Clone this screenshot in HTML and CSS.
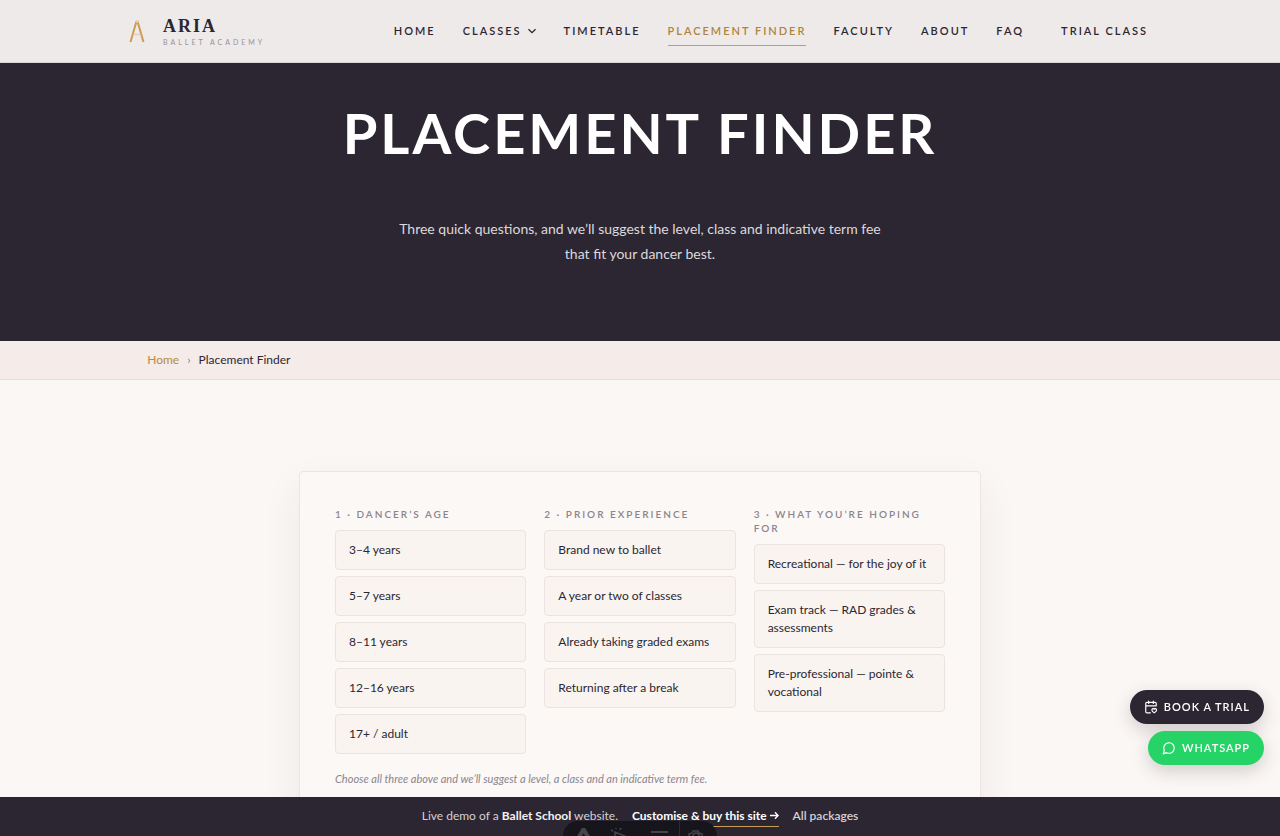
FILE: index.html
```html
<!DOCTYPE html>
<html lang="en">
<head>
<meta charset="utf-8">
<meta name="viewport" content="width=device-width, initial-scale=1">
<title>Placement Finder – Aria Ballet Academy</title>
<link rel="stylesheet" href="styles.css">
</head>
<body>
<header class="site-header">
  <div class="header-inner">
    <a class="brand" href="#">
      <svg class="brand-mark" viewBox="0 0 18 28" fill="none" aria-hidden="true">
        <path d="M2.500 25 8.300 5h1.400l5.800 20" stroke="#c99d52" stroke-width="2"/>
        <path d="M5.500 17.500h7" stroke="#e8c9c0" stroke-width="1.400"/>
        <circle cx="9" cy="4.500" r="1.500" fill="#e9c3b8"/>
      </svg>
      <span class="brand-text">
        <span class="brand-name">ARIA</span>
        <span class="brand-sub">BALLET ACADEMY</span>
      </span>
    </a>
    <nav class="nav" aria-label="Main">
      <a href="#">HOME</a>
      <a href="#">CLASSES
        <svg class="chevron" viewBox="0 0 10 10" fill="none" stroke="currentColor" stroke-width="1.300" aria-hidden="true"><path d="M1.500 3.200 5 6.700l3.500-3.500"/></svg>
      </a>
      <a href="#">TIMETABLE</a>
      <a href="#" class="active" aria-current="page">PLACEMENT FINDER</a>
      <a href="#">FACULTY</a>
      <a href="#">ABOUT</a>
      <a href="#">FAQ</a>
      <a href="#" class="trial">TRIAL CLASS</a>
    </nav>
  </div>
</header>
<main>
  <section class="hero">
    <h1>PLACEMENT FINDER</h1>
    <p>Three quick questions, and we’ll suggest the level, class and indicative term fee that fit your dancer best.</p>
  </section>
  <nav class="crumbs" aria-label="Breadcrumb">
    <div class="crumbs-inner"><a href="#">Home</a><span class="sep">›</span><span>Placement Finder</span></div>
  </nav>
  <section class="finder">
    <div class="card">
      <div class="questions">
        <div class="question" role="group" aria-labelledby="q-age">
          <h2 id="q-age">1 · DANCER’S AGE</h2>
          <button type="button">3–4 years</button>
          <button type="button">5–7 years</button>
          <button type="button">8–11 years</button>
          <button type="button">12–16 years</button>
          <button type="button">17+ / adult</button>
        </div>
        <div class="question" role="group" aria-labelledby="q-exp">
          <h2 id="q-exp">2 · PRIOR EXPERIENCE</h2>
          <button type="button">Brand new to ballet</button>
          <button type="button">A year or two of classes</button>
          <button type="button">Already taking graded exams</button>
          <button type="button">Returning after a break</button>
        </div>
        <div class="question" role="group" aria-labelledby="q-goal">
          <h2 id="q-goal">3 · WHAT YOU’RE HOPING FOR</h2>
          <button type="button">Recreational — for the joy of it</button>
          <button type="button">Exam track — RAD grades &amp; assessments</button>
          <button type="button">Pre-professional — pointe &amp; vocational</button>
        </div>
      </div>
      <p class="hint">Choose all three above and we’ll suggest a level, a class and an indicative term fee.</p>
    </div>
  </section>
</main>
<div class="floating">
  <a class="pill pill-dark" href="#">
    <svg viewBox="0 0 24 24" fill="none" stroke="currentColor" stroke-width="2" stroke-linecap="round" stroke-linejoin="round" aria-hidden="true"><path d="M21 9V6a2 2 0 0 0-2-2H5a2 2 0 0 0-2 2v14a2 2 0 0 0 2 2h6M3 10h18M8 2v4M16 2v4"/><path d="M17.500 22s-4-2.500-4-5a2.100 2.100 0 0 1 4-1 2.100 2.100 0 0 1 4 1c0 2.500-4 5-4 5z"/></svg>
    BOOK A TRIAL
  </a>
  <a class="pill pill-green" href="#">
    <svg viewBox="0 0 24 24" fill="none" stroke="currentColor" stroke-width="2" stroke-linecap="round" stroke-linejoin="round" aria-hidden="true"><path d="M7.900 20A9 9 0 1 0 4 16.100L2 22Z"/></svg>
    WHATSAPP
  </a>
</div>
<div class="demo-bar">
  <span>Live demo of a <strong>Ballet School</strong> website.</span>
  <a class="buy" href="#">Customise &amp; buy this site <svg viewBox="0 0 10 10" fill="none" stroke="currentColor" stroke-width="1.500" aria-hidden="true"><path d="M0 5h9M5.500 1.500 9 5 5.500 8.500"/></svg></a>
  <a class="packages" href="#">All packages</a>
</div>
<div class="toolbar" aria-hidden="true">
  <svg viewBox="0 0 154 15" fill="none" stroke="#44454c" stroke-width="1.500">
    <path d="M16 16 20 9h1l4 7" stroke-width="4"/>
    <path d="M52 16v-5l12 5M53 8v-1M57 9l1-2M50 10l-2-1"/>
    <path d="M88 11h17" stroke-width="2"/>
    <path d="M116.500 0v15" stroke="#2b2b33" stroke-width="1"/>
    <path d="M126 15v-2l3-1 1-2h5l1 2 3 1v2M130 15a3 3 0 0 1 6 0"/>
  </svg>
</div>
</body>
</html>
```
FILE: styles.css
```css
* { box-sizing: border-box; }
body {
  margin: 0;
  background: #fbf7f4;
  color: #2c2632;
  font-family: Lato, "Open Sans", sans-serif;
  font-size: 14px;
}
a { color: inherit; text-decoration: none; }
h1, h2, p { margin: 0; }

.site-header {
  height: 63px;
  background: #eeeae9;
  border-bottom: 1px solid #d9d5d6;
}
.header-inner {
  width: 80%;
  height: 100%;
  margin: 0 auto;
  display: flex;
  align-items: center;
  justify-content: space-between;
}
.brand { display: flex; align-items: center; gap: 17px; }
.brand-mark { width: 18px; height: 28px; }
.brand-text { display: flex; flex-direction: column; gap: 2px; }
.brand-name {
  font-family: "Liberation Serif", serif;
  font-size: 18px;
  line-height: 20px;
  font-weight: 700;
  letter-spacing: 2px;
}
.brand-sub { font-size: 7px; line-height: 8px; letter-spacing: 3px; color: #96919a; }
.nav {
  display: flex;
  align-items: center;
  gap: 27px;
  font-size: 11px;
  line-height: 18px;
  font-weight: 600;
  letter-spacing: 2px;
  white-space: nowrap;
}
.nav a { display: flex; align-items: center; gap: 5px; padding: 5px 0; border-bottom: 1px solid transparent; }
.chevron { width: 10px; height: 10px; }
.nav .active { color: #b0843c; border-bottom-color: #c99d52; }
.nav .trial { margin-left: 10px; margin-right: 4px; }

.hero {
  padding: 38px 24px 75px;
  background: #2c2632;
  text-align: center;
}
.hero h1 {
  color: #fff;
  font-size: 56px;
  line-height: 64px;
  font-weight: 700;
  letter-spacing: 3px;
}
.hero p {
  max-width: 500px;
  margin: 51px auto 0;
  color: #dcd8dc;
  font-size: 14px;
  line-height: 25px;
}

.crumbs {
  background: #f5ebe8;
  border-bottom: 1px solid #ecd9d6;
}
.crumbs-inner {
  width: 77%;
  margin: 0 auto;
  display: flex;
  gap: 8px;
  font-size: 12px;
  line-height: 38px;
}
.crumbs a { color: #b58a42; }
.crumbs .sep { color: #8b858e; }

.finder { padding: 91px 24px; }
.card {
  max-width: 682px;
  margin: 0 auto;
  padding: 35px 35px 40px;
  border: 1px solid #ece5e3;
  border-radius: 4px;
  background: #fcf8f5;
  box-shadow: 0 16px 40px rgba(44, 38, 50, 0.07);
}
.questions { display: grid; grid-template-columns: repeat(3, 1fr); gap: 18px; align-items: start; }
.question { display: flex; flex-direction: column; gap: 6px; }
.question h2 {
  margin-bottom: 3px;
  color: #8b858e;
  font-size: 10px;
  line-height: 14px;
  font-weight: 600;
  letter-spacing: 2px;
}
.question button {
  padding: 10px 13px;
  border: 1px solid #ebe3e0;
  border-radius: 4px;
  background: #f9f4f0;
  color: #2c2632;
  font: 12px/18px Lato, "Open Sans", sans-serif;
  text-align: left;
}
.hint { margin-top: 16px; color: #8b858e; font-size: 11px; line-height: 18px; font-style: italic; }

.floating {
  position: fixed;
  right: 16px;
  bottom: 71px;
  display: flex;
  flex-direction: column;
  align-items: flex-end;
  gap: 7px;
}
.pill {
  display: flex;
  align-items: center;
  gap: 6px;
  padding: 8px 14px;
  border-radius: 17px;
  color: #fff;
  font-size: 11px;
  line-height: 18px;
  font-weight: 600;
  letter-spacing: 1px;
  box-shadow: 0 6px 18px rgba(44, 38, 50, 0.2);
}
.pill svg { width: 14px; height: 14px; }
.pill-dark { background: #2c2632; }
.pill-green { background: #25d366; }

.demo-bar {
  position: fixed;
  inset: auto 0 0;
  height: 39px;
  display: flex;
  align-items: flex-start;
  justify-content: center;
  gap: 14px;
  padding-top: 9px;
  background: #2c2632;
  color: #d5d1d6;
  font-size: 12px;
  line-height: 20px;
}
.demo-bar strong { color: #f5f1f2; }
.demo-bar .buy { color: #fff; font-weight: 700; border-bottom: 1px solid #c99d52; }
.demo-bar .buy svg { width: 9px; height: 9px; }
.demo-bar .packages { font-weight: 600; }
.toolbar {
  position: fixed;
  left: 50%;
  bottom: 0;
  width: 154px;
  height: 15px;
  margin-left: -77px;
  border-radius: 15px 15px 0 0;
  background: #16151c;
}
.toolbar svg { display: block; width: 100%; height: 100%; }
```
